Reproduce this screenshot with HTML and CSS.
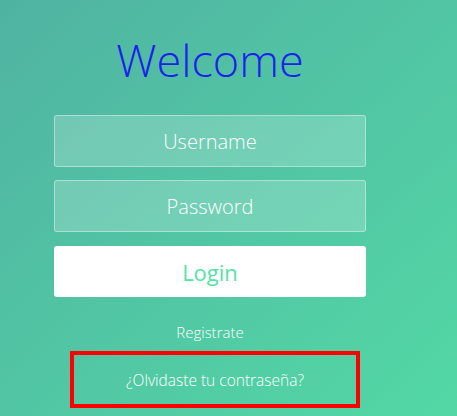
FILE: index.html
```html
<!DOCTYPE html>
<html lang="es">
<head>
<meta charset="utf-8">
<title>Login</title>
<link rel="stylesheet" href="styles.css">
</head>
<body>
<div class="wrapper">
  <h1 class="title">Welcome</h1>
  <form class="form">
    <input class="field" type="text" placeholder="Username">
    <input class="field" type="password" placeholder="Password">
    <button class="login" type="button">Login</button>
  </form>
  <a class="register" href="#">Registrate</a>
  <div class="forgot-box">
    <a class="forgot" href="#">¿Olvidaste tu contraseña?</a>
  </div>
</div>
</body>
</html>
```

FILE: styles.css
```css
html, body {
  margin: 0;
  padding: 0;
  height: 100%;
}
body {
  background: linear-gradient(to bottom right, #50b3a2 0%, #53d8a5 100%);
  font-family: "Open Sans", "Liberation Sans", sans-serif;
  overflow: hidden;
}
.wrapper {
  width: 312px;
  margin-left: 54px;
  display: flex;
  flex-direction: column;
  align-items: center;
}
.title {
  margin: 30px 0 0;
  height: 85px;
  font-size: 45px;
  line-height: 60px;
  font-weight: 300;
  color: #1a22ee;
  text-align: center;
}
.form {
  width: 312px;
  display: flex;
  flex-direction: column;
  gap: 13px;
}
.field {
  box-sizing: border-box;
  width: 312px;
  height: 52px;
  margin: 0;
  border: 1px solid rgba(255,255,255,0.4);
  border-radius: 3px;
  background: rgba(255,255,255,0.2);
  color: #fff;
  text-align: center;
  font-family: inherit;
  font-weight: 300;
  font-size: 20px;
  outline: none;
}
.field::placeholder {
  color: #fff;
  opacity: 1;
}
.login {
  box-sizing: border-box;
  width: 312px;
  height: 51px;
  margin-top: 1px;
  border: 0;
  border-radius: 3px;
  background: #fff;
  color: #53e3a6;
  font-family: inherit;
  font-size: 22px;
  font-weight: 400;
}
.register {
  margin-top: 25px;
  font-size: 15px;
  line-height: 20px;
  font-weight: 300;
  color: #fff;
  text-decoration: none;
}
.forgot-box {
  box-sizing: border-box;
  width: 290px;
  height: 57px;
  margin-top: 9px;
  margin-left: 10px;
  border: 4px solid #f00;
  display: flex;
  align-items: center;
  justify-content: center;
}
.forgot {
  font-size: 15.5px;
  font-weight: 300;
  color: #fff;
  text-decoration: none;
}
```
